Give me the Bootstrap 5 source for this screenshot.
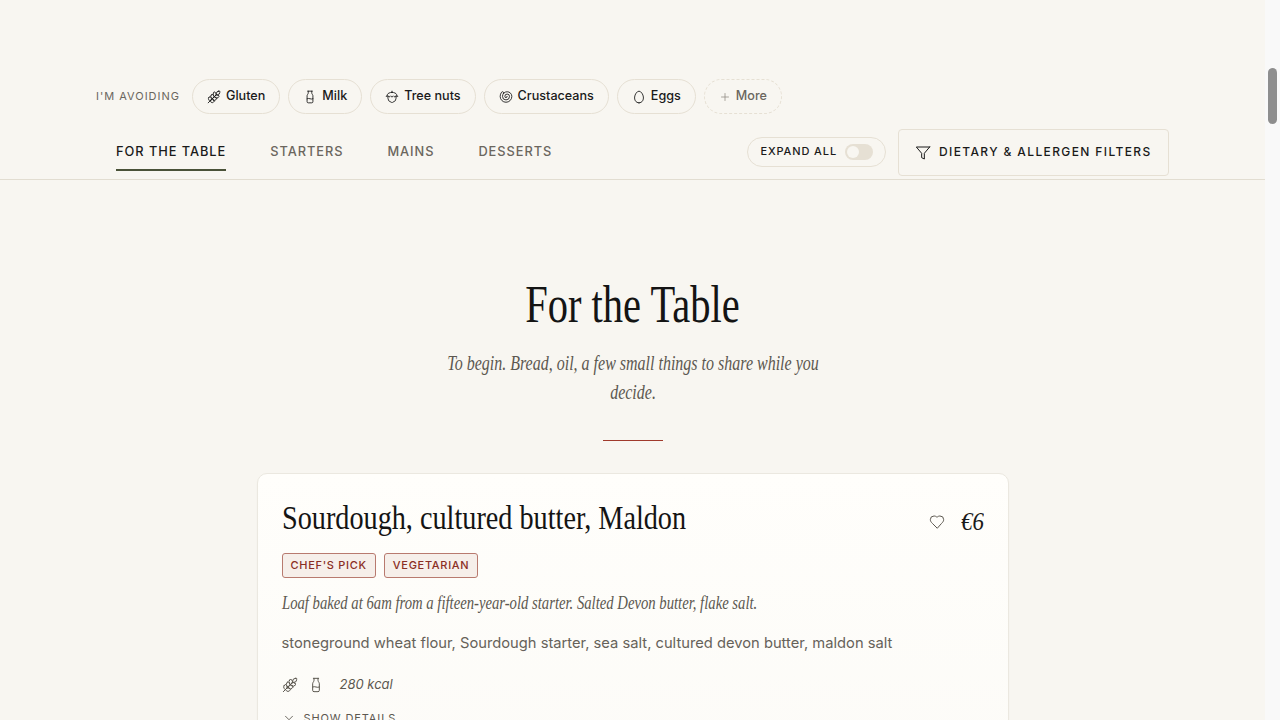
<!DOCTYPE html>
<html lang="en">
<head>
<meta charset="utf-8">
<title>For the Table</title>
<link href="https://cdn.jsdelivr.net/npm/bootstrap@5.3.0/dist/css/bootstrap.min.css" rel="stylesheet">
<style>
html,body{height:720px;overflow:hidden}
body{background:#f8f6f1;font-family:Inter,"Liberation Sans",sans-serif;color:#1a1a1a}
.shell{height:720px}
.pagearea{flex:1 1 auto;min-width:0;overflow:hidden}
.sbar{flex:0 0 15px;width:15px;background:#f9f9f9;padding:68px 3px 0 3px}
.sbar-thumb{height:56px;background:#8e8e8e;border-radius:5px}
.ico{fill:none;stroke:currentColor;stroke-width:1.5;stroke-linecap:round;stroke-linejoin:round}
.avoidrow{padding:79px 96px 0 96px;height:114px}
.avoid-label{font-size:11px;letter-spacing:.09em;color:#6b665e;font-weight:400;margin-right:4px;white-space:nowrap}
.pill{height:35px;border:1px solid #e6e0d4;border-radius:18px;padding:0 14px;font-size:12.6px;font-weight:500;color:#1a1a1a;background:transparent;display:flex;align-items:center;gap:5px;white-space:nowrap}
.pill svg{width:14px;height:14px;flex:none}
.pill-more{border-style:dashed;color:#6b665e}
.pill-more svg{width:12px;height:12px;color:#8f8a80}
.tabsrow{height:66px;padding:15px 96px 3px 96px;border-bottom:1px solid #e2ddd1}
.tablist{padding-left:20px;gap:44px;height:48px}
.tablist .nav-link{padding:0;height:42px;line-height:46px;font-size:12.8px;letter-spacing:.075em;font-weight:500;color:#6b665e;border-bottom:2px solid transparent;border-radius:0}
.tablist .nav-link.active{color:#1a1a1a;border-bottom-color:#4a5238}
.rightgroup{gap:12px}
.expand{height:30px;margin-bottom:2px;border:1px solid #e6e0d4;border-radius:15px;padding:0 12px;font-size:11px;letter-spacing:.08em;font-weight:500;gap:8px;white-space:nowrap}
.toggleT{width:28px;height:16px;background:#e6e0d4;border-radius:8px;padding:2px;display:block}
.toggleK{width:12px;height:12px;background:#f8f6f1;border-radius:50%;display:block}
.filterbtn{height:47px;width:271px;border:1px solid #e6e0d4;border-radius:4px;font-size:12px;letter-spacing:.115em;font-weight:500;color:#1a1a1a;gap:8px;padding:0 0 2px 16px;background:transparent;white-space:nowrap}
.filterbtn svg{width:16px;height:16px;flex:none;margin-top:3px}
.hero{padding-top:94px}
.heroTitle{font-family:"Liberation Serif",serif;font-size:52px;line-height:62px;font-weight:400;color:#141414;margin:0;transform:scaleX(.779)}
.heroSub{font-family:"Liberation Serif",serif;font-style:italic;font-size:20px;line-height:29px;color:#5c5850;margin:13px auto 0;width:470px;transform:scaleX(.8)}
.rule-accent{width:60px;height:1px;background:#a03a2c;margin:33px auto 33px}
.dishcard{width:752px;margin:-1px auto 0;background:linear-gradient(180deg,#fffefb 0,#fbfaf6 100%);border:1px solid #ebe8e0;border-radius:10px;padding:24px 24px 0;height:400px;box-shadow:0 1px 2px rgba(60,50,30,.03)}
.dishTitle{font-family:"Liberation Serif",serif;font-size:34px;line-height:40px;font-weight:400;color:#141414;margin:0;transform-origin:left center;transform:scaleX(.83);white-space:nowrap}
.priceblock{margin-top:8px}
.heartbtn{width:16px;height:16px;display:block;color:#5c5850}
.price{display:inline-block;font-family:"Liberation Serif",serif;font-style:italic;font-size:26px;line-height:30px;color:#1a1a1a;margin-left:-3px;transform-origin:right center;transform:scaleX(.88)}
.tagrow{margin-top:15px}
.tagbadge{height:25px;border:1px solid #b87a6f;background:#f6efea;color:#8b2e24;border-radius:3px;font-size:11px;letter-spacing:.064em;font-weight:500;padding:0 8px;display:flex;align-items:center}
.dishDesc{font-family:"Liberation Serif",serif;font-style:italic;font-size:18px;line-height:26px;color:#5c5850;margin:12px 0 0;white-space:nowrap;transform-origin:left center;transform:scaleX(.816)}
.ingred{font-size:14.72px;line-height:24px;color:#66625a;margin:15px 0 0;white-space:nowrap}
.metarow{margin-top:18px;height:24px;gap:10px;color:#5c5850}
.metarow svg{width:16px;height:16px}
.kcal{font-style:italic;font-size:13px;margin-left:6px}
.detailsbtn{font-size:11px;letter-spacing:.08em;color:#5c5850;margin-top:13px;gap:8px;font-weight:400}
.detailsbtn svg{width:14px;height:14px}
</style>
</head>
<body>
<svg width="0" height="0" class="position-absolute">
<defs>
<symbol id="i-wheat" viewBox="0 0 24 24"><path d="M2 22 16 8"/><path d="M3.470 12.530 5 11l1.530 1.530a3.500 3.500 0 0 1 0 4.940L5 19l-1.530-1.530a3.500 3.500 0 0 1 0-4.940Z"/><path d="M7.470 8.530 9 7l1.530 1.530a3.500 3.500 0 0 1 0 4.940L9 15l-1.530-1.530a3.500 3.500 0 0 1 0-4.940Z"/><path d="M11.470 4.530 13 3l1.530 1.530a3.500 3.500 0 0 1 0 4.940L13 11l-1.530-1.530a3.500 3.500 0 0 1 0-4.940Z"/><path d="M20 2h2v2a4 4 0 0 1-4 4h-2V6a4 4 0 0 1 4-4Z"/><path d="M11.470 17.470 13 19l-1.530 1.530a3.500 3.500 0 0 1-4.940 0L5 19l1.530-1.530a3.500 3.500 0 0 1 4.940 0Z"/><path d="M15.470 13.470 17 15l-1.530 1.530a3.500 3.500 0 0 1-4.940 0L9 15l1.530-1.530a3.500 3.500 0 0 1 4.940 0Z"/><path d="M19.470 9.470 21 11l-1.530 1.530a3.500 3.500 0 0 1-4.940 0L13 11l1.530-1.530a3.500 3.500 0 0 1 4.940 0Z"/></symbol>
<symbol id="i-milk" viewBox="0 0 24 24"><path d="M8 2h8"/><path d="M9 2v2.789a4 4 0 0 1-.672 2.219l-.656.984A4 4 0 0 0 7 10.212V20a2 2 0 0 0 2 2h6a2 2 0 0 0 2-2v-9.789a4 4 0 0 0-.672-2.219l-.656-.984A4 4 0 0 1 15 4.788V2"/><path d="M7 15a6.472 6.472 0 0 1 5 0 6.470 6.470 0 0 0 5 0"/></symbol>
<symbol id="i-nut" viewBox="0 0 24 24"><path d="M12 4V2"/><path d="M5 10v4a7.004 7.004 0 0 0 5.277 6.787c.412.104.802.292 1.102.592L12 22l.621-.621c.3-.3.69-.488 1.102-.592A7.003 7.003 0 0 0 19 14v-4"/><path d="M12 4C8 4 4.500 6 4 8c-.243.970-.919 1.952-2 3 1.310-.082 1.972-.290 3-1 .540.920.982 1.356 2 2 1.452-.647 1.954-1.098 2.500-2 .595.995 1.151 1.427 2.500 2 1.310-.621 1.862-1.058 2.500-2 .629.977 1.162 1.423 2.500 2 1.209-.548 1.680-.967 2-2 1.032.916 1.683 1.157 3 1-1.297-1.036-1.758-2.029-2-3-.500-2-4-4-8-4Z"/></symbol>
<symbol id="i-shell" viewBox="0 0 24 24"><path d="M14 11a2 2 0 1 1-4 0 4 4 0 0 1 8 0 6 6 0 0 1-12 0 8 8 0 0 1 16 0 10 10 0 1 1-20 0 11.930 11.930 0 0 1 2.420-7.220 2 2 0 1 1 3.160 2.450"/></symbol>
<symbol id="i-egg" viewBox="0 0 24 24"><path d="M12 22c6.230-.050 7.870-5.570 7.500-10-.360-4.340-3.950-9.960-7.500-10-3.550.040-7.140 5.660-7.500 10-.370 4.430 1.270 9.950 7.500 10z"/></symbol>
</defs>
</svg>
<div class="shell d-flex">
<div class="pagearea">
<div class="avoidrow d-flex align-items-center gap-2">
<span class="avoid-label">I'M AVOIDING</span>
<button class="pill" type="button"><svg class="ico"><use href="#i-wheat"/></svg>Gluten</button>
<button class="pill" type="button"><svg class="ico"><use href="#i-milk"/></svg>Milk</button>
<button class="pill" type="button"><svg class="ico"><use href="#i-nut"/></svg>Tree nuts</button>
<button class="pill" type="button"><svg class="ico"><use href="#i-shell"/></svg>Crustaceans</button>
<button class="pill" type="button"><svg class="ico"><use href="#i-egg"/></svg>Eggs</button>
<button class="pill pill-more" type="button"><svg class="ico" viewBox="0 0 24 24"><path d="M5 12h14M12 5v14"/></svg>More</button>
</div>
<div class="tabsrow d-flex align-items-center justify-content-between">
<ul class="nav tablist">
<li class="nav-item"><a class="nav-link active" href="#">FOR THE TABLE</a></li>
<li class="nav-item"><a class="nav-link" href="#">STARTERS</a></li>
<li class="nav-item"><a class="nav-link" href="#">MAINS</a></li>
<li class="nav-item"><a class="nav-link" href="#">DESSERTS</a></li>
</ul>
<div class="d-flex align-items-center rightgroup">
<div class="expand d-flex align-items-center"><span>EXPAND ALL</span><span class="toggleT"><span class="toggleK"></span></span></div>
<button class="btn filterbtn d-flex align-items-center" type="button"><svg class="ico" viewBox="0 0 24 24"><polygon points="22 3 2 3 10 12.460 10 19 14 21 14 12.460 22 3"/></svg>DIETARY &amp; ALLERGEN FILTERS</button>
</div>
</div>
<section class="hero text-center">
<h1 class="heroTitle">For the Table</h1>
<p class="heroSub">To begin. Bread, oil, a few small things to share while you decide.</p>
<div class="rule-accent"></div>
</section>
<article class="dishcard text-start">
<div class="d-flex justify-content-between align-items-center">
<h2 class="dishTitle">Sourdough, cultured butter, Maldon</h2>
<div class="d-flex align-items-center gap-3 priceblock">
<svg class="heartbtn ico" viewBox="0 0 24 24"><path d="M19 14c1.490-1.460 3-3.210 3-5.500A5.500 5.500 0 0 0 16.500 3c-1.760 0-3 .5-4.500 2-1.500-1.500-2.740-2-4.500-2A5.500 5.500 0 0 0 2 8.500c0 2.300 1.500 4.050 3 5.500l7 7Z"/></svg>
<span class="price">€6</span>
</div>
</div>
<div class="tagrow d-flex gap-2">
<span class="tagbadge">CHEF'S PICK</span>
<span class="tagbadge">VEGETARIAN</span>
</div>
<p class="dishDesc">Loaf baked at 6am from a fifteen-year-old starter. Salted Devon butter, flake salt.</p>
<p class="ingred">stoneground wheat flour, Sourdough starter, sea salt, cultured devon butter, maldon salt</p>
<div class="metarow d-flex align-items-center">
<svg class="ico"><use href="#i-wheat"/></svg><svg class="ico"><use href="#i-milk"/></svg><span class="kcal">280 kcal</span>
</div>
<div class="detailsbtn d-flex align-items-center"><svg class="ico" viewBox="0 0 24 24"><path d="m6 9 6 6 6-6"/></svg>SHOW DETAILS</div>
</article>
</div>
<div class="sbar" aria-hidden="true"><div class="sbar-thumb"></div></div>
</div>
</body>
</html>
